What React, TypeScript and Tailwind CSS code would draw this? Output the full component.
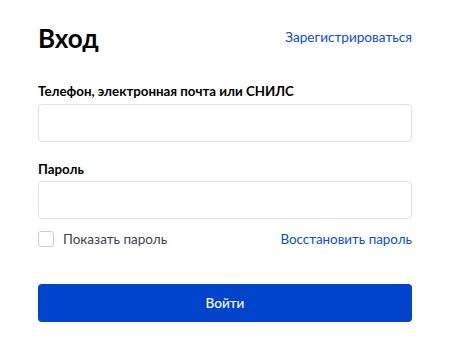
import React from "react";

export default function App() {
  return (
    <div
      className="w-[452px] h-[346px] bg-white pl-[38px] pr-[40px] pt-[22px] text-[#0b1f33]"
      style={{ fontFamily: "Lato, 'Noto Sans', sans-serif" }}
    >
      <div className="flex items-center justify-between h-[32px]">
        <h1 className="text-[26px] leading-[32px] font-bold text-black">Вход</h1>
        <a className="text-[13.6px] leading-[20px] text-[#0d4cd3] -mt-[2px]">Зарегистрироваться</a>
      </div>
      <div className="mt-[27px] text-[13.3px] leading-[20px] font-bold text-black">
        Телефон, электронная почта или СНИЛС
      </div>
      <div className="mt-[3px] h-[38px] rounded-[4px] border border-[#dfe1e8] bg-white" />
      <div className="mt-[17px] text-[13.3px] leading-[20px] font-bold text-black">Пароль</div>
      <div className="mt-[2px] h-[38px] rounded-[4px] border border-[#dfe1e8] bg-white" />
      <div className="mt-[12px] flex items-center justify-between h-[16px]">
        <label className="flex items-center gap-[9px]">
          <span className="w-[16px] h-[16px] rounded-[3px] border border-[#c9ced6] bg-white" />
          <span className="text-[13.5px] leading-[20px] text-[#3b4451]">Показать пароль</span>
        </label>
        <a className="text-[13.4px] leading-[20px] text-[#0d4cd3]">Восстановить пароль</a>
      </div>
      <button className="mt-[37px] w-full h-[38px] rounded-[4px] bg-[#0044cc] text-white text-[13.5px] leading-[20px] font-medium">
        Войти
      </button>
    </div>
  );
}
